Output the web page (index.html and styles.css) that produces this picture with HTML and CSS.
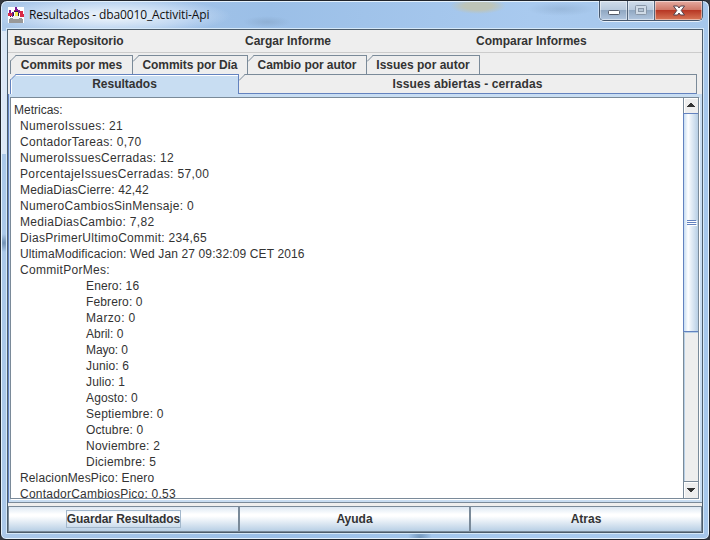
FILE: index.html
```html
<!DOCTYPE html>
<html lang="es">
<head>
<meta charset="utf-8">
<title>Resultados - dba0010_Activiti-Api</title>
<link rel="stylesheet" href="styles.css">
</head>
<body>
<div class="window">
  <header class="titlebar">
    <svg class="app-icon" width="16" height="16" viewBox="0 0 16 16" shape-rendering="crispEdges">
      <rect width="16" height="16" fill="#fff"/>
      <path fill="#7b1c97" d="M7 0h2v2h1v2H7zM1 3h2v3H1zM4 5h2v5H4zM10 3h2v3h-2z"/>
      <path fill="#d92945" d="M0 6h4v3H0zM12 4h3v3h1v3h-4zM6 3h1v2H6z"/>
      <path fill="#25213c" d="M6 4h4v1H6zM5 6h1v3H5zM10 6h1v3h-1zM2 9h1v1H2z"/>
      <path fill="#f3e650" d="M7 5h3v4H7z"/>
      <path fill="#999" d="M2 11h12v1h1v4H1v-4h1z"/>
      <path fill="#eee" d="M5 9h6v3H5z"/>
    </svg>
    <h1 class="title">Resultados - dba0010_Activiti-Api</h1>
    <div class="caption">
      <span class="cap min"><svg width="27" height="18"><rect x="8.5" y="9.500" width="11" height="4" rx="1" fill="#fff" stroke="#545b69"/></svg></span>
      <span class="cap max"><svg width="26" height="18"><rect x="7.500" y="4.500" width="11" height="9" rx="1" fill="#d0dbe7" stroke="#8997a8"/><rect x="10.500" y="7.500" width="5" height="3" fill="#b4c3d3" stroke="#8997a8"/></svg></span>
      <span class="cap close"><svg width="45" height="18"><path d="M18.500 5h4l1.500 2 1.500-2h4l-3.300 4.500 3.300 4.500h-4L24 12l-1.500 2h-4l3.300-4.500z" fill="#fff" stroke="#53404b"/></svg></span>
    </div>
  </header>
  <main class="content">
    <nav class="menubar"><span class="tight">Buscar Repositorio</span><span>Cargar Informe</span><span>Comparar Informes</span></nav>
    <div class="tabs upper">
      <div class="tab mes"><svg class="corner" width="7" height="7"><path class="cut" d="M0 0h6L0 6z"/><path class="edge" d="M0 6.500L6.500 0"/></svg><span>Commits por mes</span></div>
      <div class="tab dia"><svg class="corner" width="7" height="7"><path class="cut" d="M0 0h6L0 6z"/><path class="edge" d="M0 6.500L6.500 0"/></svg><span class="tight">Commits por Día</span></div>
      <div class="tab cambio"><svg class="corner" width="7" height="7"><path class="cut" d="M0 0h6L0 6z"/><path class="edge" d="M0 6.500L6.500 0"/></svg><span class="tight">Cambio por autor</span></div>
      <div class="tab issues"><svg class="corner" width="7" height="7"><path class="cut" d="M0 0h6L0 6z"/><path class="edge" d="M0 6.500L6.500 0"/></svg><span>Issues por autor</span></div>
    </div>
    <div class="tabs lower">
      <div class="tab selected"><svg class="corner" width="7" height="7"><path class="cut" d="M0 0h6L0 6z"/><path class="edge" d="M0 6.500L6.500 0"/></svg><span>Resultados</span></div>
      <div class="tab abiertas"><svg class="corner" width="7" height="7"><path class="cut" d="M0 0h6L0 6z"/><path class="edge" d="M0 6.500L6.500 0"/></svg><span class="wide">Issues abiertas - cerradas</span></div>
    </div>
    <section class="panel">
      <div class="scrollpane">
        <div class="report">
          <p>Metricas:</p>
          <p class="in k4">NumeroIssues: 21</p>
          <p class="in k3">ContadorTareas: 0,70</p>
          <p class="in k3">NumeroIssuesCerradas: 12</p>
          <p class="in k4">PorcentajeIssuesCerradas: 57,00</p>
          <p class="in k1">MediaDiasCierre: 42,42</p>
          <p class="in k3">NumeroCambiosSinMensaje: 0</p>
          <p class="in k3">MediaDiasCambio: 7,82</p>
          <p class="in k3">DiasPrimerUltimoCommit: 234,65</p>
          <p class="in k1">UltimaModificacion: Wed Jan 27 09:32:09 CET 2016</p>
          <p class="in k3">CommitPorMes:</p>
          <p class="month k1">Enero: 16</p>
          <p class="month k1">Febrero: 0</p>
          <p class="month k4">Marzo: 0</p>
          <p class="month">Abril: 0</p>
          <p class="month k0">Mayo: 0</p>
          <p class="month k1">Junio: 6</p>
          <p class="month k1">Julio: 1</p>
          <p class="month k1">Agosto: 0</p>
          <p class="month k2">Septiembre: 0</p>
          <p class="month k1">Octubre: 0</p>
          <p class="month k2">Noviembre: 2</p>
          <p class="month k2">Diciembre: 5</p>
          <p class="in k1">RelacionMesPico: Enero</p>
          <p class="in k2">ContadorCambiosPico: 0.53</p>
        </div>
        <div class="scrollbar">
          <div class="arrow up"><svg width="14" height="15" shape-rendering="crispEdges"><path d="M6 5h2v1h1v1h1v1h1v1H3V8h1V7h1V6h1z" fill="#333"/></svg></div>
          <div class="thumb"><i></i><i></i><i></i></div>
          <div class="track"></div>
          <div class="arrow down"><svg width="14" height="15" shape-rendering="crispEdges"><path d="M3 6h8v1h-1v1H9v1H8v1H6V9H5V8H4V7H3z" fill="#333"/></svg></div>
        </div>
      </div>
    </section>
    <footer class="buttons">
      <div class="button"><span class="focus tight">Guardar Resultados</span></div>
      <div class="button"><span>Ayuda</span></div>
      <div class="button"><span>Atras</span></div>
    </footer>
  </main>
</div>
</body>
</html>
```
FILE: styles.css
```css
* { box-sizing: border-box; }
body { margin: 0; width: 710px; height: 540px; overflow: hidden; background: #34383f; font: 12px/16px "Liberation Sans", Arial, sans-serif; color: #333; }
svg { display: block; }
.window {
  width: 710px; height: 540px; padding: 0 6px; border: 1px solid #20242b; border-radius: 7px 7px 6px 6px;
  box-shadow: inset 0 0 0 1px #e4f1fc;
  background:
    radial-gradient(ellipse 120px 19px at 110px 15px, #e8f1faee 20%, #dceafa88 65%, transparent),
    radial-gradient(ellipse 28px 8px at 477px 5px, #bdc4b8 50%, transparent),
    radial-gradient(ellipse 24px 6px at 266px 21px, #819fc077, transparent),
    radial-gradient(ellipse 34px 7px at 560px 8px, #819fc066, transparent),
    radial-gradient(ellipse 12px 14px at 419px 537px, #7397bd, transparent),
    radial-gradient(ellipse 8px 9px at 3px 242px, #7190b3, transparent),
    linear-gradient(#dce7f5, #dce7f5) 0 30px / 7px 123px no-repeat,
    linear-gradient(90deg, #abc8e9, #9bbfe7 38%, #a9caef 75%, #a6c7eb);
}
.titlebar { display: flex; height: 28px; align-items: flex-start; }
.app-icon { margin: 6px 0 0 1px; }
.title { margin: 6px 0 0 5px; font: 12px/16px "Open Sans", "Noto Sans", sans-serif; color: #111; white-space: nowrap; letter-spacing: -.12px; }
.caption { display: flex; width: 104px; height: 20px; margin-left: auto; margin-right: 0; border: 1px solid #46576d; border-top: 0; border-radius: 0 0 5px 5px; overflow: hidden; box-shadow: 0 1px 0 #ffffffbb, -1px 0 0 #ffffff66; }
.cap { height: 19px; box-shadow: inset 0 0 0 1px #ffffff77; background: linear-gradient(#d0dcea, #b9cadd 46%, #91a8c2 50%, #b1c6df); }
.min { width: 28px; border-right: 1px solid #53657b; }
.max { width: 27px; border-right: 1px solid #53657b; }
.close { width: 47px; background: linear-gradient(#e5aba1, #cf7969 46%, #b83825 50%, #d87858); }
.content { width: 696px; height: 504px; border: 1px solid #4c5c6b; background: #eee; box-shadow: 0 0 0 1px #d5e8f8; font-weight: bold; }
.menubar { display: grid; grid-template-columns: 231px 231px 1fr; height: 23px; padding: 3px 6px 0; border-bottom: 1px solid #ccc; white-space: nowrap; }
.tight { letter-spacing: -.07px; }
.wide { letter-spacing: .1px; }
.tabs { display: flex; height: 19px; padding-left: 2px; }
.upper { margin-top: 2px; }
.tab { position: relative; height: 19px; border-top: 1px solid #7a8a99; border-right: 1px solid #7a8a99; text-align: center; line-height: 17px; padding-top: 1px; white-space: nowrap; }
.mes { width: 123px; border-left: 1px solid #7a8a99; }
.dia { width: 115px; }
.cambio { width: 119px; }
.issues { width: 113px; }
.corner { position: absolute; left: 0; top: -1px; }
.mes .corner, .selected .corner { left: -1px; }
.cut { fill: #eee; }
.edge { fill: none; stroke: #7a8a99; stroke-width: 1; }
.lower .tab { height: 20px; }
.selected { width: 229px; background: #c8ddf2; border-color: #6382bf; border-left: 1px solid #6382bf; box-shadow: inset 1px 1px 0 #fff; }
.selected .edge { stroke: #6382bf; }
.abiertas { width: 458px; border-bottom: 1px solid #6382bf; }
.panel { height: 409px; margin-top: 1px; padding: 3px 3px 0 1px; background: #c8ddf2; border-left: 1px solid #6382bf; border-bottom: 1px solid #7a8a99; }
.scrollpane { display: flex; width: 689px; height: 402px; border: 1px solid #7a8a99; background: #fff; box-shadow: 1px 1px 0 #fff; }
.report { flex: 1; height: 400px; overflow: hidden; padding: 4px 0 0 3px; font-weight: normal; white-space: nowrap; }
.report p { margin: 0; height: 16px; }
.report .in { padding-left: 6px; }
.report .month { padding-left: 72px; }
.k0 { letter-spacing: -.12px; }
.k1 { letter-spacing: .13px; }
.k2 { letter-spacing: .23px; }
.k3 { letter-spacing: .3px; }
.k4 { letter-spacing: .36px; }
.scrollbar { display: flex; flex-direction: column; width: 15px; border-left: 1px solid #7a8a99; background: #eee; }
.arrow { height: 15px; box-shadow: inset 1px 1px 0 #fff; }
.thumb { display: flex; flex-direction: column; gap: 1px; justify-content: center; align-items: center; height: 219px; margin-left: -1px; border: 1px solid #6382bf; border-right: 0; background: linear-gradient(90deg, #c8ddf2, #fff 30%, #e8f0f8 48%, #b8cfe5); }
.thumb i { width: 9px; height: 1px; background: #6382bf; box-shadow: 1px 1px 0 #fff; }
.track { flex: 1; box-shadow: inset 1px 1px 0 #b8cfe5; }
.down { height: 17px; border-top: 1px solid #7a8a99; }
.buttons { display: grid; grid-template-columns: 231px 231px 232px; height: 26px; margin-top: 3px; }
.button { display: flex; align-items: center; justify-content: center; border: 1px solid #7a8a99; background: linear-gradient(#dde8f3, #fff 30%, #fff 38%, #b8cfe5); }
.focus { height: 18px; line-height: 18px; padding: 0 1px; outline: 1px solid #a3b8cc; outline-offset: -1px; }
```
